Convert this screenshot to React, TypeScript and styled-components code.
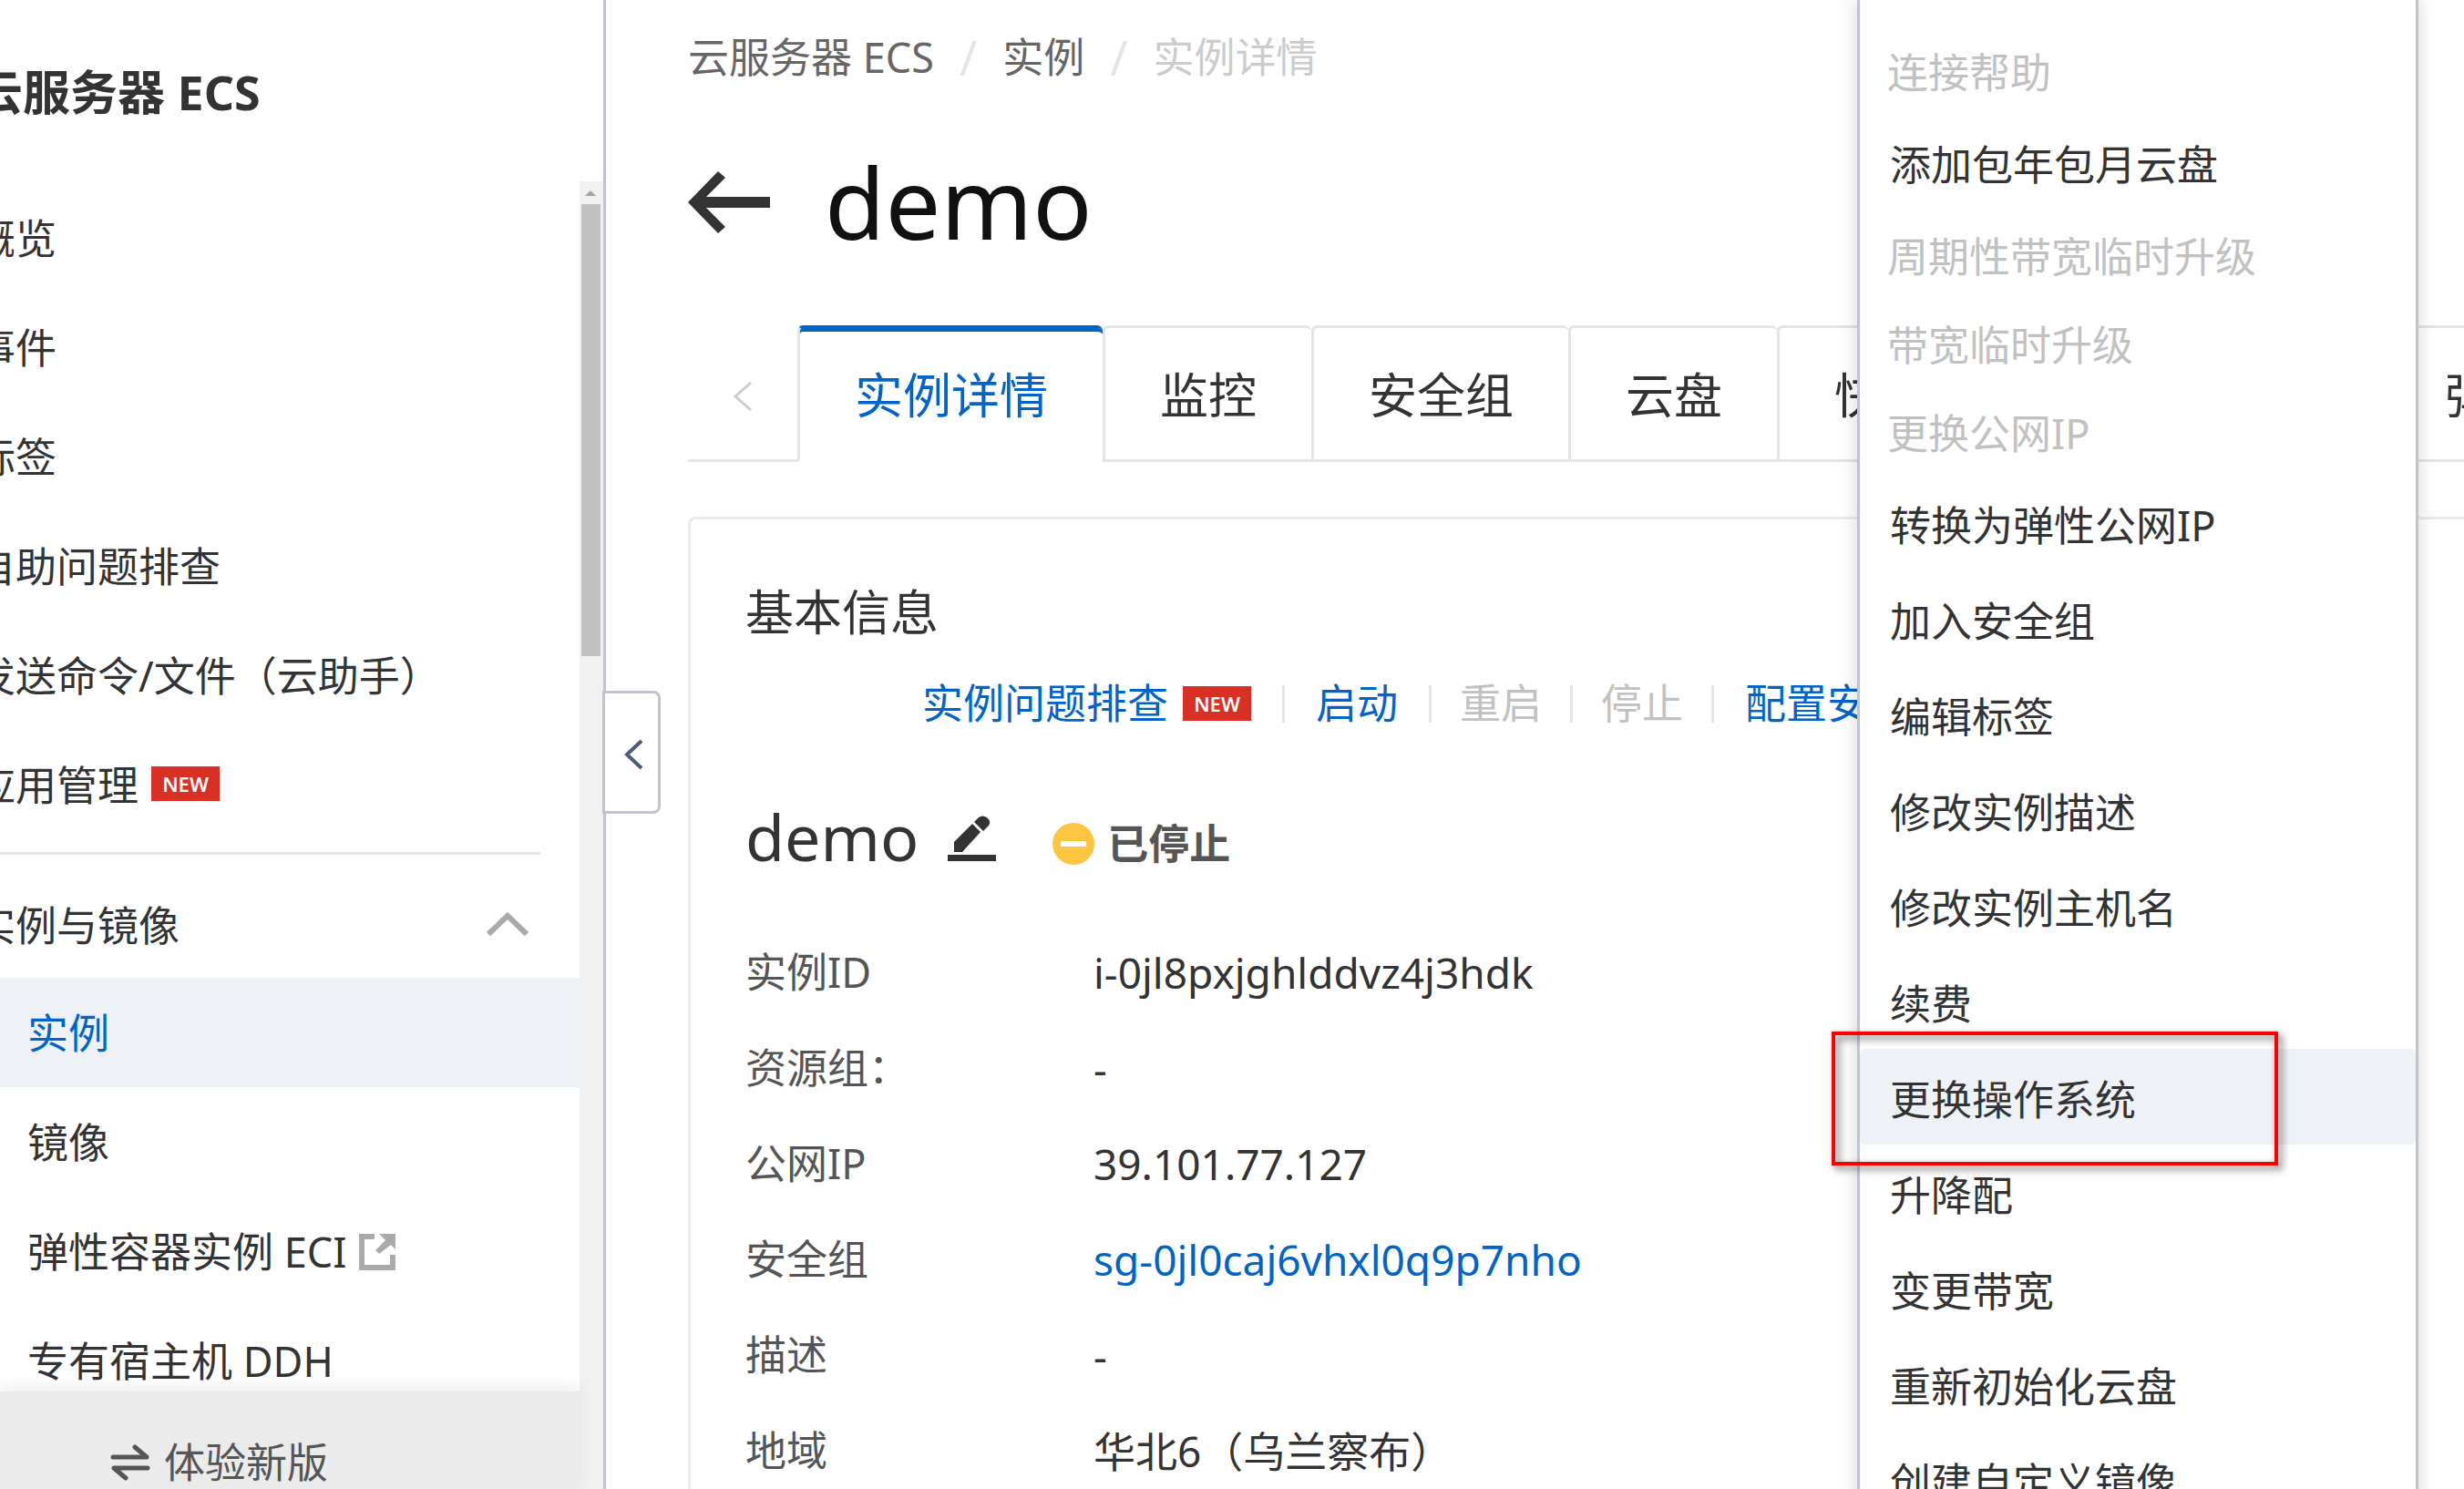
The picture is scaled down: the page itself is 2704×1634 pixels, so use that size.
import React from "react";
import styled, { createGlobalStyle, css } from "styled-components";

const color = {
  text: "#333",
  label: "#555",
  muted: "#c1c1c1",
  link: "#0064c8",
  line: "#e3e4e6",
  frame: "#c0c5cd",
  hover: "#eef1f6",
  danger: "#d93026",
};

const GlobalStyle = createGlobalStyle`
  * { box-sizing: border-box; }
  html, body, #root { height: 100%; }
  body {
    margin: 0;
    overflow: hidden;
    background: #fff;
    color: ${color.text};
    font-family: "Noto Sans", "Noto Sans CJK SC", sans-serif;
    font-size: 45px;
    line-height: 60px;
  }
  ul, ol, dl, dd, h1, h2, h3 { margin: 0; padding: 0; list-style: none; font-weight: 400; }
  a { color: inherit; text-decoration: none; }
  button {
    margin: 0;
    padding: 0;
    border: 0;
    background: none;
    color: inherit;
    font: inherit;
    text-align: left;
    white-space: nowrap;
  }
  svg { display: block; flex: none; }
`;

const Page = styled.div`
  position: relative;
  display: flex;
  height: 100vh;
  overflow: hidden;
  white-space: nowrap;
`;

/* ---------- sidebar ---------- */

const Sidebar = styled.aside`
  display: flex;
  flex: none;
  flex-direction: column;
  width: 665px;
  border-right: 3px solid ${color.frame};
  overflow: hidden;
`;

const Product = styled.h2`
  flex: none;
  height: 199px;
  margin-left: -27px;
  padding-top: 71px;
  font-size: 52px;
  font-weight: 700;
`;

const SidebarBody = styled.div`
  display: flex;
  flex: 1;
  min-height: 0;
`;

const SidebarColumn = styled.div`
  display: flex;
  flex: 1;
  flex-direction: column;
  min-width: 0;
`;

const Nav = styled.nav`
  flex: 1;
  min-height: 0;
  margin-left: -28px;
  padding-top: 3px;
  overflow: hidden;
`;

const NavLink = styled.a<{ $nested?: boolean; $active?: boolean }>`
  display: flex;
  align-items: center;
  gap: 14px;
  height: 120px;
  padding: ${(p) => (p.$nested ? "2px 0 0 58px" : "0")};
  background: ${(p) => (p.$active ? color.hover : "transparent")};
  color: ${(p) => (p.$active ? color.link : color.text)};
`;

const Divider = styled.hr`
  height: 3px;
  margin: 13px 43px 21px 0;
  border: 0;
  background: ${color.line};
`;

const GroupToggle = styled.button`
  display: flex;
  align-items: center;
  justify-content: space-between;
  width: 100%;
  height: 114px;
  padding-right: 56px;
  & > svg { margin-bottom: 4px; }
`;

const Badge = styled.span`
  display: inline-flex;
  align-items: center;
  justify-content: center;
  width: 75px;
  height: 38px;
  margin-bottom: 4px;
  background: ${color.danger};
  color: #fff;
  font-size: 22px;
  font-weight: 600;
  line-height: 38px;
`;

const SidebarFooter = styled.button`
  position: relative;
  display: flex;
  flex: none;
  gap: 15px;
  height: 107px;
  padding: 48px 0 0 121px;
  background: #ebebeb;
  box-shadow: 0 -4px 16px rgba(0, 0, 0, 0.08);
  color: #555;
  & > svg { margin-top: 10px; }
`;

const ScrollTrack = styled.div`
  display: flex;
  flex: none;
  flex-direction: column;
  align-items: center;
  width: 26px;
  padding-right: 2px;
  background: #f1f1f1;
`;

const ScrollArrow = styled.div`
  display: flex;
  align-items: center;
  height: 25px;
`;

const ScrollThumb = styled.div`
  width: 21px;
  height: 496px;
  background: #c1c1c1;
`;

/* ---------- main ---------- */

const Main = styled.main`
  position: relative;
  flex: 1;
  min-width: 0;
  padding: 33px 0 0 90px;
`;

const CollapseHandle = styled.button`
  position: absolute;
  top: 758px;
  left: -4px;
  display: flex;
  align-items: center;
  justify-content: center;
  width: 64px;
  height: 135px;
  padding: 4px 0 0 4px;
  border: 3px solid ${color.frame};
  border-radius: 0 8px 8px 0;
  background: #fff;
`;

const Breadcrumb = styled.ol`
  display: flex;
  gap: 28px;
`;

const Crumb = styled.li<{ $current?: boolean }>`
  display: flex;
  gap: 28px;
  color: ${(p) => (p.$current ? "#ccc" : "#666")};
`;

const Slash = styled.span`
  color: ${color.line};
  font-size: 52px;
`;

const TitleRow = styled.div`
  display: flex;
  align-items: center;
  gap: 60px;
  height: 264px;
  padding-bottom: 6px;
`;

const PageTitle = styled.h1`
  color: #111;
  font-size: 108px;
  line-height: 140px;
`;

const TabBar = styled.div`
  display: flex;
  height: 150px;
  overflow: hidden;
`;

const TabScroll = styled.button`
  display: flex;
  flex: none;
  align-items: center;
  justify-content: center;
  width: 120px;
  padding-top: 8px;
  border-bottom: 3px solid ${color.line};
`;

const Tab = styled.button<{ $active?: boolean }>`
  flex: none;
  padding: 4px 60px 0;
  border: solid ${color.line};
  border-width: 3px 0 3px 3px;
  border-radius: 6px 6px 0 0;
  font-size: 53px;
  line-height: 72px;
  ${(p) =>
    p.$active &&
    css`
      border-bottom-color: transparent;
      box-shadow: inset 0 4px 0 ${color.link};
      border-top-color: ${color.link};
      color: ${color.link};
    `}
`;

const Card = styled.section`
  margin-top: 60px;
  height: 1200px;
  border: solid #ebebeb;
  border-width: 3px 0 0 3px;
  border-radius: 8px 0 0 0;
  padding: 66px 0 0 60px;
`;

const CardTitle = styled.h2`
  height: 72px;
  font-size: 53px;
  line-height: 72px;
`;

const Actions = styled.div`
  display: flex;
  align-items: center;
  height: 60px;
  margin-top: 34px;
  padding-left: 160px;
`;

const Action = styled.button`
  display: flex;
  flex: none;
  align-items: center;
  gap: 16px;
  height: 41px;
  padding: 0 34px;
  border-right: 3px solid ${color.line};
  color: ${color.link};
  &:disabled { padding: 0 31px; color: ${color.muted}; }
  & > ${Badge} { margin-bottom: 0; }
`;

const NameRow = styled.div`
  display: flex;
  align-items: center;
  height: 100px;
  margin-top: 66px;
`;

const InstanceName = styled.h3`
  font-size: 70px;
  line-height: 100px;
`;

const EditButton = styled.button`
  margin: 6px 62px 0 32px;
`;

const Status = styled.span`
  display: flex;
  align-items: center;
  gap: 14px;
  padding-top: 16px;
  color: #555;
  font-weight: 700;
`;

const Details = styled.dl`
  display: grid;
  grid-template-columns: 382px 1fr;
  grid-auto-rows: 105px;
  align-items: center;
  margin-top: 46px;
`;

const Term = styled.dt`
  color: ${color.label};
`;

const Value = styled.dd`
  font-size: 46px;
`;

const DetailLink = styled.a`
  color: ${color.link};
`;

/* ---------- drop-down menu ---------- */

const Menu = styled.ul`
  position: absolute;
  top: 0;
  right: 50px;
  z-index: 2;
  width: 616px;
  min-height: 100%;
  padding-top: 28px;
  border: solid ${color.frame};
  border-width: 0 3px;
  background: #fff;
  box-shadow: 0 0 20px rgba(0, 0, 0, 0.16);
`;

const MenuItem = styled.li`
  position: relative;
`;

const MenuButton = styled.button<{ $active?: boolean }>`
  display: block;
  width: 100%;
  height: 105px;
  padding: 6px 0 0 33px;
  border-radius: 6px;
  background: ${(p) => (p.$active ? color.hover : "transparent")};
  &:disabled { height: 97px; padding-left: 30px; color: ${color.muted}; }
`;

const Marker = styled.div`
  position: absolute;
  top: -19px;
  left: -31px;
  width: 490px;
  height: 147px;
  border: 4px solid #f00;
  filter: drop-shadow(4px 4px 4px rgba(0, 0, 0, 0.6));
  pointer-events: none;
`;

const topLinks: { label: string; isNew?: boolean }[] = [
  { label: "概览" },
  { label: "事件" },
  { label: "标签" },
  { label: "自助问题排查" },
  { label: "发送命令/文件（云助手）" },
  { label: "应用管理", isNew: true },
];

const tabs = ["实例详情", "监控", "安全组", "云盘", "快照一致性组", "快照", "弹性网卡"];

const actions: { label: string; isNew?: boolean; disabled?: boolean }[] = [
  { label: "实例问题排查", isNew: true },
  { label: "启动" },
  { label: "重启", disabled: true },
  { label: "停止", disabled: true },
  { label: "配置安全组规则" },
];

const details: { term: string; value: string; link?: boolean }[] = [
  { term: "实例ID", value: "i-0jl8pxjghlddvz4j3hdk" },
  { term: "资源组：", value: "-" },
  { term: "公网IP", value: "39.101.77.127" },
  { term: "安全组", value: "sg-0jl0caj6vhxl0q9p7nho", link: true },
  { term: "描述", value: "-" },
  { term: "地域", value: "华北6（乌兰察布）" },
];

const menu: { label: string; disabled?: boolean; active?: boolean }[] = [
  { label: "连接帮助", disabled: true },
  { label: "添加包年包月云盘" },
  { label: "周期性带宽临时升级", disabled: true },
  { label: "带宽临时升级", disabled: true },
  { label: "更换公网IP", disabled: true },
  { label: "转换为弹性公网IP" },
  { label: "加入安全组" },
  { label: "编辑标签" },
  { label: "修改实例描述" },
  { label: "修改实例主机名" },
  { label: "续费" },
  { label: "更换操作系统", active: true },
  { label: "升降配" },
  { label: "变更带宽" },
  { label: "重新初始化云盘" },
  { label: "创建自定义镜像" },
];

const ChevronUp = () => (
  <svg width="46" height="28" viewBox="0 0 46 28" fill="none" stroke="#aaa" strokeWidth="6">
    <path d="M2 25 L23 5 L44 25" />
  </svg>
);

const ExternalIcon = () => (
  <svg width="40" height="40" viewBox="0 0 40 40" fill="#aaa">
    <path d="M0 0H17V6H6V34H34V23H40V40H0Z" />
    <path d="M22 0H40V17L35 12L22 22L18 18L29 7Z" />
  </svg>
);

const SwapIcon = () => (
  <svg width="44" height="40" viewBox="0 0 44 40" fill="none" stroke="#555" strokeWidth="5" strokeLinecap="round" strokeLinejoin="round">
    <path d="M3 14H40L27 3" />
    <path d="M41 26H4L17 37" />
  </svg>
);

const BackArrow = () => (
  <svg width="90" height="68" viewBox="0 0 90 68" fill="#333">
    <path d="M33 0L41 7L20 28H90V40H20L41 61L33 68L0 34Z" />
  </svg>
);

const EditIcon = () => (
  <svg width="53" height="52" viewBox="0 0 53 52" fill="#333">
    <path d="M0 43H53V50H0Z" />
    <path d="M7 40V29L27 9L36 18L16 40Z" />
    <path d="M29 7L34 2Q38 -1 43 2Q48 6 45 11L39 17Z" />
  </svg>
);

const StoppedIcon = () => (
  <svg width="46" height="46" viewBox="0 0 46 46">
    <circle cx="23" cy="23" r="23" fill="#ffc440" />
    <path d="M9 20H37V26H9Z" fill="#fff" />
  </svg>
);

export default function App() {
  return (
    <Page>
      <GlobalStyle />
      <Sidebar>
        <Product>云服务器 ECS</Product>
        <SidebarBody>
          <SidebarColumn>
            <Nav>
              {topLinks.map((l) => (
                <NavLink href="#" key={l.label}>
                  {l.label}
                  {l.isNew && <Badge>NEW</Badge>}
                </NavLink>
              ))}
              <Divider />
              <GroupToggle type="button" aria-expanded="true">
                实例与镜像
                <ChevronUp />
              </GroupToggle>
              <NavLink href="#" $nested $active aria-current="page">实例</NavLink>
              <NavLink href="#" $nested>镜像</NavLink>
              <NavLink href="#" $nested>
                弹性容器实例 ECI
                <ExternalIcon />
              </NavLink>
              <NavLink href="#" $nested>专有宿主机 DDH</NavLink>
            </Nav>
            <SidebarFooter type="button">
              <SwapIcon />
              体验新版
            </SidebarFooter>
          </SidebarColumn>
          <ScrollTrack>
            <ScrollArrow>
              <svg width="12" height="6" viewBox="0 0 12 6" fill="#a3a3a3">
                <path d="M6 0L12 6H0Z" />
              </svg>
            </ScrollArrow>
            <ScrollThumb />
          </ScrollTrack>
        </SidebarBody>
      </Sidebar>

      <Main>
        <Breadcrumb>
          <Crumb><a href="#">云服务器 ECS</a><Slash>/</Slash></Crumb>
          <Crumb><a href="#">实例</a><Slash>/</Slash></Crumb>
          <Crumb $current>实例详情</Crumb>
        </Breadcrumb>
        <TitleRow>
          <button type="button" aria-label="返回"><BackArrow /></button>
          <PageTitle>demo</PageTitle>
        </TitleRow>
        <TabBar role="tablist">
          <TabScroll type="button" aria-label="向左滚动">
            <svg width="22" height="34" viewBox="0 0 22 34" fill="none" stroke="#ccc" strokeWidth="3">
              <path d="M20 2L3 17L20 32" />
            </svg>
          </TabScroll>
          {tabs.map((t, i) => (
            <Tab key={t} type="button" role="tab" aria-selected={i === 0} $active={i === 0}>{t}</Tab>
          ))}
        </TabBar>
        <Card>
          <CardTitle>基本信息</CardTitle>
          <Actions>
            {actions.map((a) => (
              <Action key={a.label} type="button" disabled={a.disabled}>
                {a.label}
                {a.isNew && <Badge>NEW</Badge>}
              </Action>
            ))}
          </Actions>
          <NameRow>
            <InstanceName>demo</InstanceName>
            <EditButton type="button" aria-label="编辑"><EditIcon /></EditButton>
            <Status><StoppedIcon />已停止</Status>
          </NameRow>
          <Details>
            {details.map((d) => (
              <React.Fragment key={d.term}>
                <Term>{d.term}</Term>
                <Value>{d.link ? <DetailLink href="#">{d.value}</DetailLink> : d.value}</Value>
              </React.Fragment>
            ))}
          </Details>
        </Card>
        <CollapseHandle type="button" aria-label="收起菜单">
          <svg width="22" height="34" viewBox="0 0 22 34" fill="none" stroke="#4c5e77" strokeWidth="4">
            <path d="M20 2L4 17L20 32" />
          </svg>
        </CollapseHandle>
      </Main>

      <Menu>
        {menu.map((m) => (
          <MenuItem key={m.label}>
            <MenuButton type="button" disabled={m.disabled} $active={m.active}>{m.label}</MenuButton>
            {m.active && <Marker />}
          </MenuItem>
        ))}
      </Menu>
    </Page>
  );
}
